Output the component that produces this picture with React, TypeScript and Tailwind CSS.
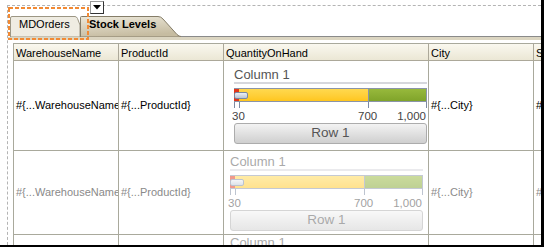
import React from "react";

function Gauge({ faded }: { faded?: boolean }) {
  return (
    <div className={faded ? "w-[193px] flex flex-col opacity-50" : "w-[193px] flex flex-col"}>
      <div className="h-[17px] text-[13px] leading-[15px] text-[#555] border-b-2 border-[#d6d7dc] whitespace-nowrap">
        Column 1
      </div>
      <div className="mt-[4px] relative h-[14px] border border-[#8a94a8] flex">
        <div className="w-[134px] border-r border-[#8a94a8] bg-linear-to-b from-[#ffd94e] to-[#ffc61c]" />
        <div className="flex-1 bg-linear-to-b from-[#97b93c] to-[#80a42a]" />
        <div className="absolute left-[-1px] top-0 bottom-0 w-[5px] bg-[#e2361c]" />
        <div className="absolute left-[-1px] top-[3px] w-[14px] h-[7px] rounded-[2px] border border-[#7a89a2] bg-linear-to-b from-[#eceff4] to-[#bcc6d4]" />
      </div>
      <svg width="193" height="6" className="block">
        <g stroke="#7d8aa3" strokeWidth="1">
          <line x1="0.5" y1="0" x2="0.5" y2="6" />
          <line x1="5.5" y1="0" x2="5.5" y2="6" />
          <line x1="134.5" y1="0" x2="134.5" y2="6" />
          <line x1="192.5" y1="0" x2="192.5" y2="6" />
        </g>
      </svg>
      <div className="relative mt-[2px] h-[13px] text-[11.5px] leading-[13px] text-[#444] whitespace-nowrap">
        <span className="absolute left-[-2px] top-0">30</span>
        <span className="absolute left-[124px] top-0">700</span>
        <span className="absolute right-[1px] top-0">1,000</span>
      </div>
      <div className="h-[21px] rounded-[3px] border border-[#acacac] bg-linear-to-b from-[#f3f3f3] to-[#cfcfcf] flex items-center justify-center text-[13.5px] text-[#555]">
        Row 1
      </div>
    </div>
  );
}

const hdr =
  "border-r border-b border-[#aca899] bg-linear-to-b from-[#faf8ef] to-[#ebe7d5] pl-[2px] pt-[1px] text-[11px] leading-[16px] whitespace-nowrap overflow-hidden";
const cell =
  "border-r border-b border-[#a9a99c] pl-[2px] flex items-center text-[11px] whitespace-nowrap overflow-hidden";
const cellFaded =
  "border-r border-b border-[#a9a99c] pl-[2px] flex items-center text-[11px] text-[#8a8a8a] whitespace-nowrap overflow-hidden";

export default function App() {
  return (
    <div className="relative w-[544px] h-[247px] overflow-hidden bg-white border-r-[3px] border-b-[2px] border-black font-['Liberation_Sans',Arial,sans-serif] text-black">
      <div className="h-full pl-[7px] pt-[5px]">
        <div className="h-full border-l border-t border-dashed border-[#b4b4b4] flex flex-col">
          <div className="mt-[10px] h-[21px] flex shrink-0">
            <div className="relative ml-[2px] w-[70px] h-[21px]">
              <svg width="70" height="21" className="absolute inset-0">
                <path
                  d="M0.5,21 L0.5,2 Q0.5,0.5 2,0.5 L65,0.5 Q66.5,0.5 67.5,2.5 L70,9 L70,21 Z"
                  fill="#efece2"
                  stroke="#9c9684"
                />
              </svg>
              <div className="relative pl-[9px] pt-[2px] text-[11px] leading-[13px] text-black">MDOrders</div>
            </div>
            <div className="relative w-[101px] h-[21px]">
              <svg width="101" height="21" className="absolute inset-0">
                <defs>
                  <linearGradient id="tabg" x1="0" y1="0" x2="0.3" y2="1">
                    <stop offset="0" stopColor="#ece8da" />
                    <stop offset="1" stopColor="#c6bca1" />
                  </linearGradient>
                </defs>
                <path
                  d="M0.5,21 L0.5,1.5 Q0.5,0.5 1.5,0.5 L78,0.5 Q81,0.5 83,3 L97,18.5 Q99,20.5 101,20.5 L101,21 Z"
                  fill="url(#tabg)"
                  stroke="#857d68"
                />
              </svg>
              <div className="relative pl-[9px] pt-[2px] text-[11px] leading-[13px] font-bold text-black whitespace-nowrap">
                Stock Levels
              </div>
            </div>
            <div className="flex-1 border-b border-[#8a8a8a]" />
          </div>
          <div className="h-[3px] shrink-0 bg-[#dbd5c1]" />
          <div className="mt-[3px] ml-[5px] w-max grid grid-cols-[105px_105px_205px_105px_140px] grid-rows-[17px_90px_84px_84px] border-l border-t border-[#a9a99c]">
            <div className={hdr}>WarehouseName</div>
            <div className={hdr}>ProductId</div>
            <div className={hdr}>QuantityOnHand</div>
            <div className={hdr}>City</div>
            <div className={hdr}>State</div>

            <div className={cell}>#&#123;...WarehouseName&#125;</div>
            <div className={cell}>#&#123;...ProductId&#125;</div>
            <div className="border-r border-b border-[#a9a99c] pt-[6px] pl-[10px] overflow-hidden">
              <Gauge />
            </div>
            <div className={cell}>#&#123;...City&#125;</div>
            <div className={cell}>#&#123;...State&#125;</div>

            <div className={cellFaded}>#&#123;...WarehouseName&#125;</div>
            <div className={cellFaded}>#&#123;...ProductId&#125;</div>
            <div className="border-r border-b border-[#a9a99c] pt-[3px] pl-[6px] overflow-hidden">
              <Gauge faded />
            </div>
            <div className={cellFaded}>#&#123;...City&#125;</div>
            <div className={cellFaded}>#&#123;...State&#125;</div>

            <div className={cellFaded}>#&#123;...WarehouseName&#125;</div>
            <div className={cellFaded}>#&#123;...ProductId&#125;</div>
            <div className="border-r border-b border-[#a9a99c] pt-[0px] pl-[6px] overflow-hidden">
              <Gauge faded />
            </div>
            <div className={cellFaded}>#&#123;...City&#125;</div>
            <div className={cellFaded}>#&#123;...State&#125;</div>
          </div>
        </div>
      </div>

      <svg width="81" height="33" className="absolute left-[8px] top-[7px]">
        <rect x="1" y="1" width="79" height="31" fill="none" stroke="#f28a34" strokeWidth="2" strokeDasharray="4 2" />
      </svg>

      <div className="absolute left-[90px] top-[1px] w-[14px] h-[13px] bg-white border border-[#9a9a9a] border-r-[#333] border-b-[#333] flex items-center justify-center">
        <svg width="8" height="5">
          <polygon points="0,0 8,0 4,4.5" fill="#000" />
        </svg>
      </div>
    </div>
  );
}
